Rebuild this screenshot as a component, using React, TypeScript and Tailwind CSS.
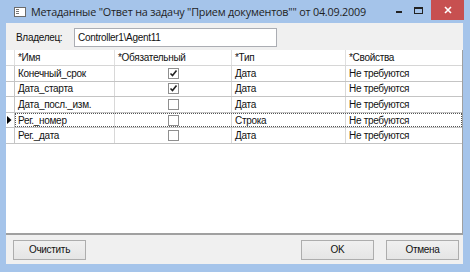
import React from "react";

const rows = [
  { name: "Конечный_срок", req: true, type: "Дата", props: "Не требуются" },
  { name: "Дата_старта", req: true, type: "Дата", props: "Не требуются" },
  { name: "Дата_посл._изм.", req: false, type: "Дата", props: "Не требуются" },
  { name: "Рег._номер", req: false, type: "Строка", props: "Не требуются", current: true },
  { name: "Рег._дата", req: false, type: "Дата", props: "Не требуются" },
];

function Check({ on }: { on: boolean }) {
  return (
    <div className="flex h-[11px] w-[11px] items-center justify-center border border-[#8f8f8f] bg-white">
      {on && (
        <svg width="9" height="9" viewBox="0 0 9 9">
          <path d="M1.5 4.5 L3.5 6.5 L7.5 1.5" fill="none" stroke="#222" strokeWidth="1.6" />
        </svg>
      )}
    </div>
  );
}

function Button({ label, w }: { label: string; w: string }) {
  return (
    <div
      className={`flex h-[20px] ${w} items-center justify-center border border-[#adadad] bg-gradient-to-b from-[#f0f0f0] to-[#e5e5e5] text-[10px] text-[#111]`}
    >
      {label}
    </div>
  );
}

export default function App() {
  return (
    <div className="flex h-[272px] w-[470px] flex-col bg-[#a5c4ea] font-['Liberation_Sans',sans-serif]">
      {/* title bar */}
      <div className="flex h-[23px] shrink-0 items-start">
        <div className="ml-[14px] mt-[7px] flex h-[10px] w-[12px] flex-col border border-[#6b6b6b] bg-white p-[1px]">
          <div className="h-[1px] w-[3px] bg-[#777]" />
          <div className="mt-[1px] h-[1px] w-[3px] bg-[#777]" />
          <div className="mt-[1px] h-[1px] w-[3px] bg-[#777]" />
        </div>
        <div className="ml-[5px] mt-[4px] font-['Open_Sans',sans-serif] text-[10.8px] tracking-[-0.2px] text-[#1e1e1e]">
          Метаданные "Ответ на задачу "Прием документов"" от 04.09.2009
        </div>
        <div className="ml-auto flex items-start">
          <div className="mt-[11px] mr-[12px] h-[2px] w-[6px] bg-[#222]" />
          <div className="mt-[7px] mr-[8px] h-[7px] w-[9px] border border-t-2 border-[#222]" />
          <div className="flex h-[20px] w-[33px] items-center justify-center bg-[#c75050]">
            <svg width="8" height="8" viewBox="0 0 8 8">
              <path d="M1 1 L7 7 M7 1 L1 7" stroke="#fff" strokeWidth="1.6" />
            </svg>
          </div>
          <div className="w-[6px]" />
        </div>
      </div>

      {/* client area */}
      <div className="mb-[8px] ml-[6px] mr-[7px] flex flex-1 flex-col bg-[#f0f0f0] text-[10px] tracking-[-0.3px] text-[#111]">
        <div className="flex h-[27px] shrink-0 items-center pt-[1px]">
          <div className="ml-[10px] w-[58px]">Владелец:</div>
          <div className="flex h-[19px] w-[203px] items-center border border-[#abadb3] bg-white pl-[3px]">
            Controller1\Agent11
          </div>
        </div>

        <div className="flex-1 border-b border-r border-[#a0a0a0] bg-white">
          <div className="flex h-[16px] border-b border-[#d6d6d6]">
            <div className="w-[9px] border-r border-[#e0e0e0]" />
            <div className="flex w-[100px] items-center border-r border-[#e0e0e0] pl-[3px]">*Имя</div>
            <div className="flex w-[117px] items-center border-r border-[#e0e0e0] pl-[3px]">*Обязательный</div>
            <div className="flex w-[114px] items-center border-r border-[#e0e0e0] pl-[3px]">*Тип</div>
            <div className="flex flex-1 items-center pl-[3px]">*Свойства</div>
          </div>
          {rows.map((r) => (
            <div key={r.name} className="flex h-[15.6px] border-b border-[#c4c4c4]">
              <div className="flex w-[9px] items-center border-r border-[#c4c4c4] pl-[1px]">
                {r.current && (
                  <svg width="5" height="8" viewBox="0 0 5 8">
                    <path d="M0 0 L4.5 4 L0 8 Z" fill="#000" />
                  </svg>
                )}
              </div>
              <div
                className={`flex flex-1 ${r.current ? "outline outline-1 outline-dotted outline-[#555] -outline-offset-1" : ""}`}
              >
                <div className="flex w-[100px] items-center border-r border-[#d8d8d8] pl-[3px]">{r.name}</div>
                <div className="flex w-[117px] items-center justify-center border-r border-[#d8d8d8]">
                  <Check on={r.req} />
                </div>
                <div className="flex w-[114px] items-center border-r border-[#d8d8d8] pl-[3px]">{r.type}</div>
                <div className="flex flex-1 items-center pl-[3px]">{r.props}</div>
              </div>
            </div>
          ))}
        </div>

        <div className="flex h-[30px] shrink-0 items-center border-t border-[#a0a0a0] pr-[4px]">
          <div className="ml-[7px]">
            <Button label="Очистить" w="w-[73px]" />
          </div>
          <div className="ml-auto flex gap-[12px]">
            <Button label="OK" w="w-[73px]" />
            <Button label="Отмена" w="w-[73px]" />
          </div>
        </div>
      </div>
    </div>
  );
}
